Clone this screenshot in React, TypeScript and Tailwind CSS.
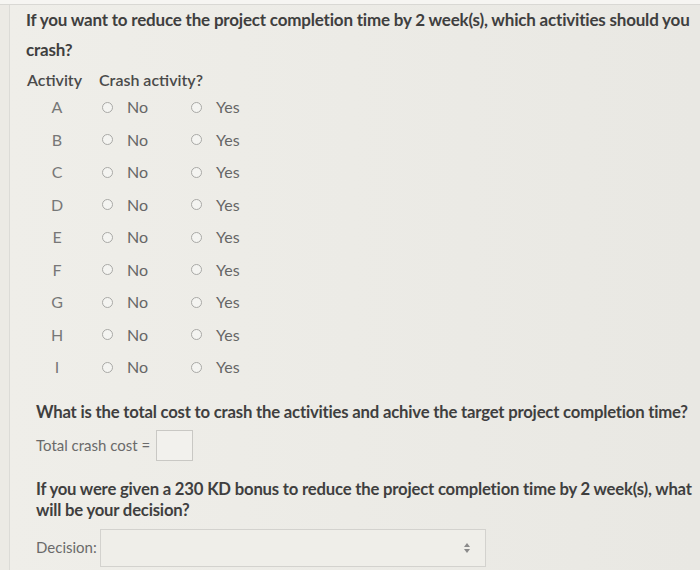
const ROWS = ["A", "B", "C", "D", "E", "F", "G", "H", "I"];

function Radio({ label }: { label: string }) {
  return (
    <label className="flex items-center gap-[14px]">
      <span className="w-[11px] h-[11px] rounded-full border border-[#a9a9a6] bg-[#f4f4f1]" />
      <span>{label}</span>
    </label>
  );
}

export default function App() {
  return (
    <div className="w-[700px] h-[570px] overflow-hidden bg-[#eceae5] font-['Lato',sans-serif] text-[#505050]">
      <div className="h-[5px] bg-[#f6f5f2] border-b border-[#d9d8d4]" />
      <div className="ml-[9px] border-l border-[#dcdbd7] h-[565px] bg-gradient-to-r from-[#efeee9] to-[#e9e8e3]">
        {/* first question */}
        <div className="pl-[16px]">
          <p className="text-[17px] font-bold leading-[30px] tracking-[-0.2px] text-[#3f3f3f]">
            If you want to reduce the project completion time by 2 week(s), which activities should you crash?
          </p>
          <div className="mt-[5px] flex text-[16px] font-semibold text-[#4a4a4a] leading-[20px]">
            <span className="w-[73px] pl-[1px]">Activity</span>
            <span>Crash activity?</span>
          </div>
          <div className="mt-[1px] text-[16px] text-[#666]">
            {ROWS.map(r => (
              <div key={r} className="flex items-center h-[32.5px]">
                <span className="w-[60px] text-center text-[#777] pl-[2px]">{r}</span>
                <div className="w-[105px] pl-[16px]"><Radio label="No" /></div>
                <Radio label="Yes" />
              </div>
            ))}
          </div>
        </div>

        {/* total cost */}
        <div className="pl-[26px] pt-[17px]">
          <p className="text-[16.7px] font-bold leading-[22px] tracking-[-0.2px] text-[#3f3f3f]">
            What is the total cost to crash the activities and achive the target project completion time?
          </p>
          <div className="mt-[7px] flex items-center gap-[6px] text-[15px] text-[#6a6a6a]">
            <span>Total crash cost =</span>
            <span className="w-[37px] h-[31px] border border-[#c9c8c4] bg-[#f2f1ed]" />
          </div>

          <p className="mt-[18px] text-[16.7px] font-bold leading-[21px] tracking-[-0.2px] text-[#3f3f3f] pr-[4px]">
            If you were given a 230 KD bonus to reduce the project completion time by 2 week(s), what will be your decision?
          </p>
          <div className="mt-[8px] flex items-center gap-[3px] text-[15px] text-[#6a6a6a]">
            <span>Decision:</span>
            <div className="w-[386px] h-[38px] border border-[#d3d2ce] bg-[#efeee9] flex items-center justify-end pr-[14px]">
              <svg width="8" height="12" viewBox="0 0 8 12">
                <path d="M4 1 L7 5 H1 Z M4 11 L1 7 H7 Z" fill="#8a8a8a" />
              </svg>
            </div>
          </div>
        </div>
      </div>
    </div>
  );
}
